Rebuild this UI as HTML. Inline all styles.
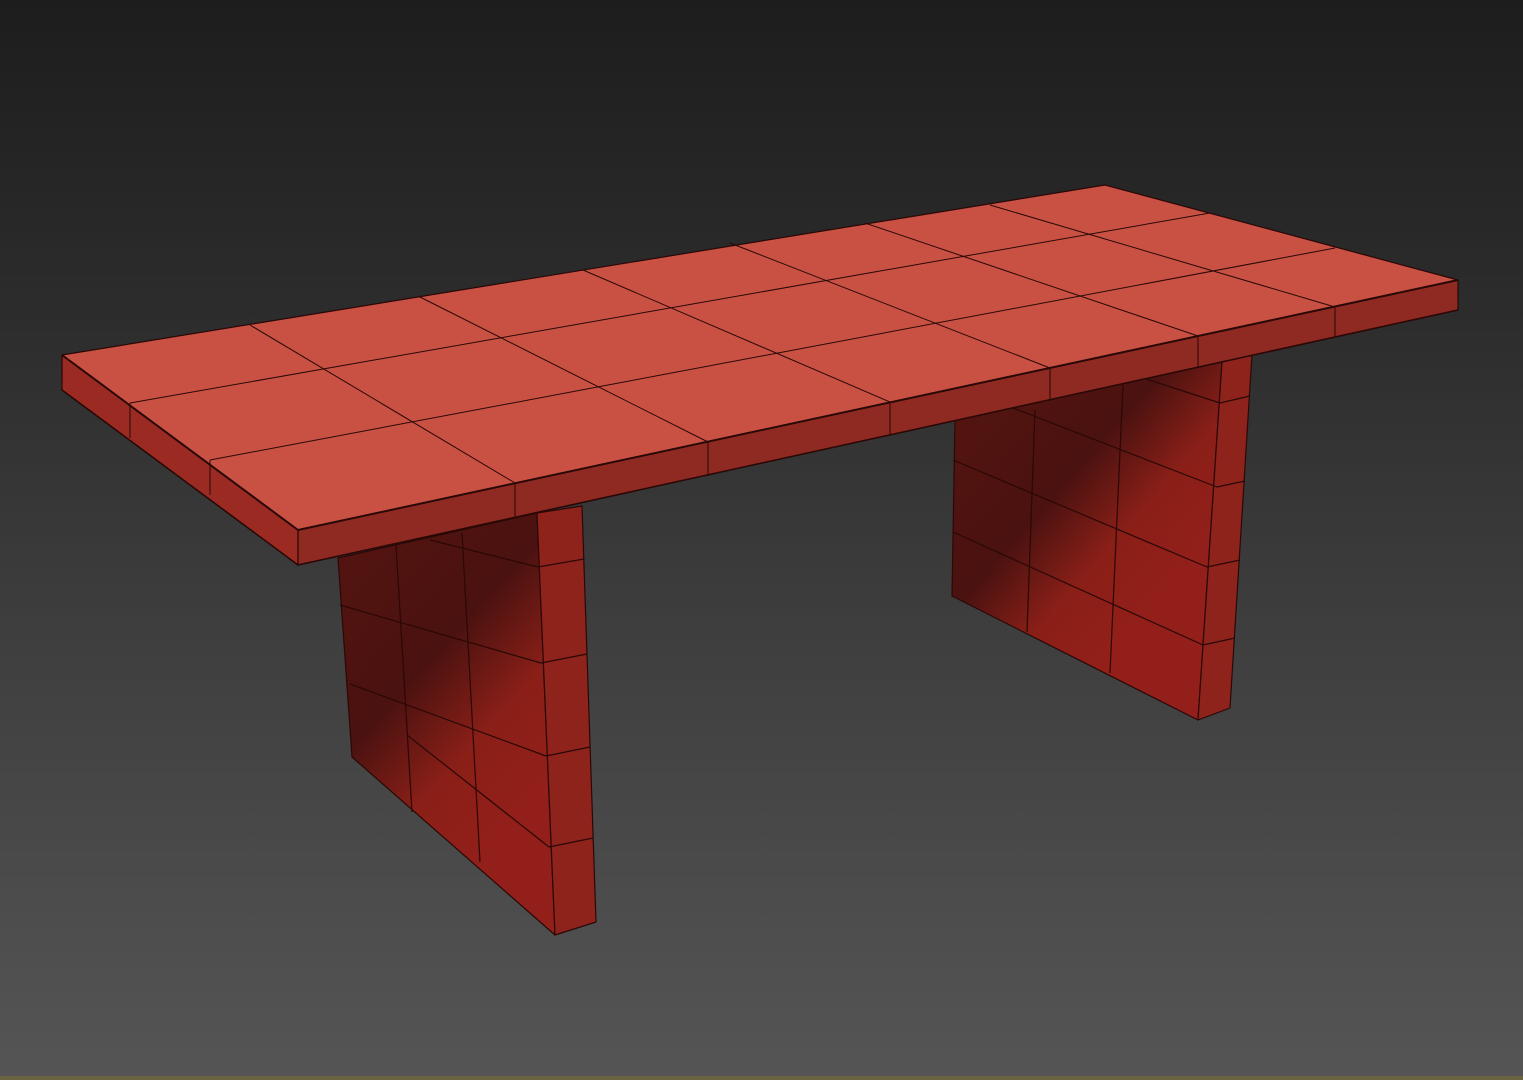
<!DOCTYPE html>
<html><head><meta charset="utf-8"><style>
html,body{margin:0;padding:0;width:1523px;height:1080px;overflow:hidden}
body{background:linear-gradient(#1d1d1d 0%,#2d2d2d 30%,#3f3f3f 60%,#555 100%)}
svg{position:absolute;left:0;top:0}
</style></head><body>
<svg width="1523" height="1080" viewBox="0 0 1523 1080">
<defs>
<linearGradient id="lg1" x1="338" y1="560" x2="560" y2="760" gradientUnits="userSpaceOnUse">
<stop offset="0" stop-color="#531410"/><stop offset="0.45" stop-color="#4a1210"/><stop offset="0.75" stop-color="#8a1f18"/><stop offset="1" stop-color="#921f19"/></linearGradient>
<linearGradient id="lg2" x1="955" y1="430" x2="1150" y2="600" gradientUnits="userSpaceOnUse">
<stop offset="0" stop-color="#531410"/><stop offset="0.45" stop-color="#4a1210"/><stop offset="0.75" stop-color="#8a1f18"/><stop offset="1" stop-color="#921f19"/></linearGradient>
</defs>
<rect x="0" y="1076" width="1523" height="4" fill="#6b6440"/>
<g stroke="#2a0806" stroke-width="1.2" stroke-linejoin="round">
<!-- right leg -->
<polygon points="955,420 1222,362 1198,720 952,596" fill="url(#lg2)"/>
<polygon points="1222,362 1252,354 1230,708 1198,720" fill="#8e231c"/>
<polyline fill="none" points="953,460 1207,567"/>
<polyline fill="none" points="953,532 1203,645"/>
<polyline fill="none" points="1013,408 1217,487"/>
<polyline fill="none" points="1143,378 1220,403"/>
<polyline fill="none" points="1035,410 1027,632"/>
<polyline fill="none" points="1123,385 1110,673"/>
<polyline fill="none" points="1220,403 1250,396"/>
<polyline fill="none" points="1217,487 1245,481"/>
<polyline fill="none" points="1207,567 1240,560"/>
<polyline fill="none" points="1203,645 1235,638"/>
<!-- left leg -->
<polygon points="338,558 537,513 555,935 352,757" fill="url(#lg1)"/>
<polygon points="537,513 582,506 596,922 555,935" fill="#8e231c"/>
<polyline fill="none" points="430,540 538,567"/>
<polyline fill="none" points="340,605 541,663"/>
<polyline fill="none" points="350,684 546,756"/>
<polyline fill="none" points="407,735 549,847"/>
<polyline fill="none" points="396,545 412,812"/>
<polyline fill="none" points="462,533 480,862"/>
<polyline fill="none" points="538,567 584,559"/>
<polyline fill="none" points="541,663 587,654"/>
<polyline fill="none" points="546,756 590,747"/>
<polyline fill="none" points="549,847 593,838"/>
<!-- table top -->
<polygon points="62,355 298,530 298,565 62,390" fill="#9a2a22"/>
<polygon points="298,530 1458,280 1458,310 298,565" fill="#8f2a22"/>
<polygon points="62,355 1105,185 1458,280 298,530" fill="#c85144"/>
<g fill="none" stroke-width="1">
<line x1="250" y1="325" x2="515" y2="483"/>
<line x1="418" y1="296" x2="708" y2="442"/>
<line x1="583" y1="270" x2="890" y2="402"/>
<line x1="730" y1="243" x2="1050" y2="368"/>
<line x1="865" y1="223" x2="1198" y2="336"/>
<line x1="990" y1="205" x2="1335" y2="307"/>
<line x1="130" y1="403" x2="1210" y2="213"/>
<line x1="210" y1="460" x2="1335" y2="248"/>
<line x1="515" y1="483" x2="515" y2="518"/>
<line x1="708" y1="442" x2="708" y2="476"/>
<line x1="890" y1="402" x2="890" y2="436"/>
<line x1="1050" y1="368" x2="1050" y2="401"/>
<line x1="1198" y1="336" x2="1198" y2="368"/>
<line x1="1335" y1="307" x2="1335" y2="337"/>
<line x1="130" y1="403" x2="130" y2="438"/>
<line x1="210" y1="460" x2="210" y2="495"/>
</g>
<polyline fill="none" stroke-width="2" points="62,355 298,530 1458,280"/>
<polyline fill="none" stroke-width="1.5" points="62,390 298,565 1458,310"/>
</g>
</svg>
</body></html>
